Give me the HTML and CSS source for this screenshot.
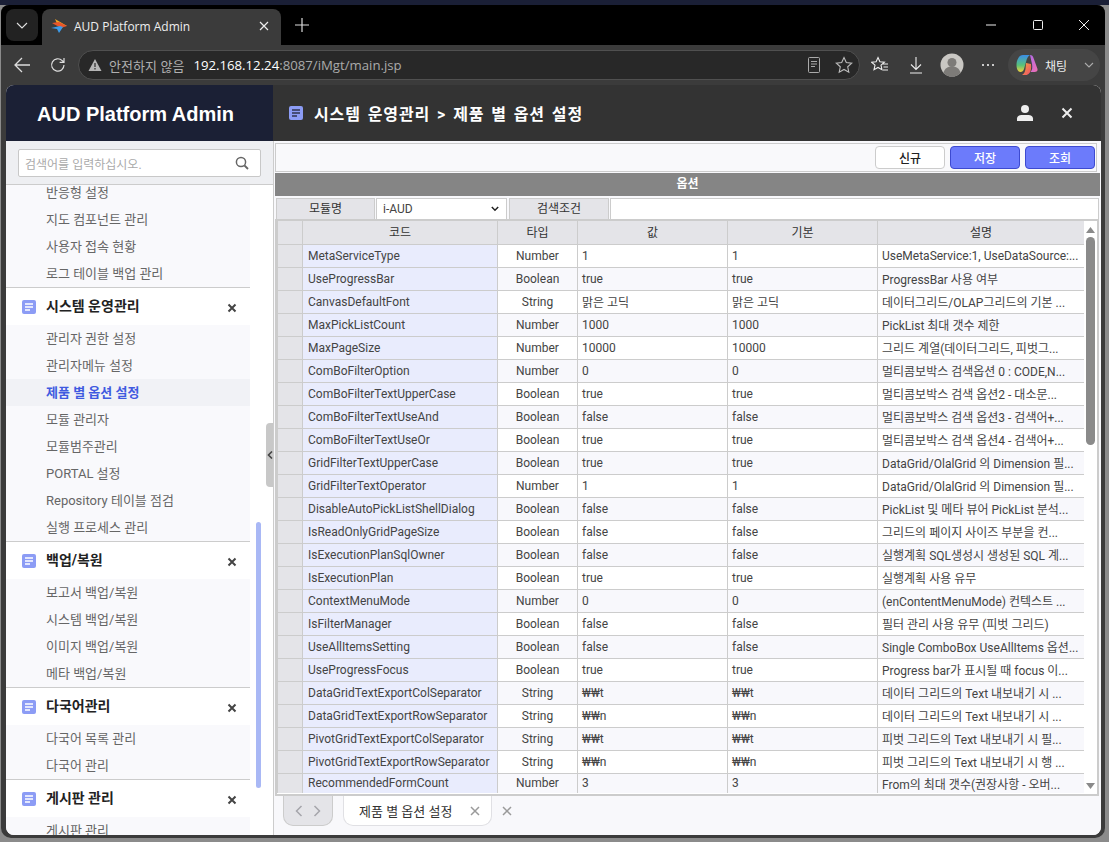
FILE: index.html
```html
<!DOCTYPE html>
<html lang="ko">
<head>
    <meta charset="UTF-8">
    <title>AUD Platform Admin</title>
    <link rel="stylesheet" href="styles.css">
</head>
<body>
    <div class="window">
        <div class="tabstrip">
            <div class="tab-menu">
                <svg width="12" height="12" viewBox="0 0 12 12"><path d="M1 4l5 5 5-5" fill="none" stroke="#ddd" stroke-width="1.1"/></svg>
            </div>
            <div class="tab">
                <svg class="favicon" width="16" height="16" viewBox="0 0 16 16">
                    <path d="M4 1l12 7-9 0z" fill="#f5a623"/>
                    <path d="M1 5l7-1 8 4-6 2z" fill="#e8562a"/>
                    <path d="M0 10l9-2 3 1-4 6-2-4z" fill="#3d9be9"/>
                </svg>
                <span class="tab-title">AUD Platform Admin</span>
                <svg width="12" height="12" viewBox="0 0 12 12"><path d="M2 2l8 8M10 2l-8 8" stroke="#eee" stroke-width="1.2"/></svg>
            </div>
            <div class="tab-new">
                <svg width="16" height="16" viewBox="0 0 16 16"><path d="M8 1v14M1 8h14" stroke="#ddd" stroke-width="1.2"/></svg>
            </div>
            <div class="win-controls">
                <svg width="12" height="12" viewBox="0 0 12 12"><path d="M1 6h10" stroke="#eee" stroke-width="1"/></svg>
                <svg width="12" height="12" viewBox="0 0 12 12"><rect x="1.5" y="1.5" width="9" height="9" rx="1" fill="none" stroke="#eee" stroke-width="1"/></svg>
                <svg width="12" height="12" viewBox="0 0 12 12"><path d="M1 1l10 10M11 1L1 11" stroke="#eee" stroke-width="1"/></svg>
            </div>
        </div>

        <div class="toolbar">
            <svg class="nav-icon" width="18" height="18" viewBox="0 0 18 18"><path d="M17 9H2M9 2L2 9l7 7" fill="none" stroke="#ddd" stroke-width="1.3"/></svg>
            <svg class="nav-icon" width="18" height="18" viewBox="0 0 18 18"><path d="M15 9a6.2 6.2 0 1 1-1.8-4.4L15 6.4M15 2v4.4h-4.4" fill="none" stroke="#ddd" stroke-width="1.2"/></svg>
            <div class="address">
                <svg width="14" height="14" viewBox="0 0 14 14"><path d="M7 1l6.5 12H.5z" fill="#b5b5b5"/><path d="M7 5v4M7 10v1.5" stroke="#333" stroke-width="1.3"/></svg>
                <span class="insecure">안전하지 않음</span>
                <span class="url"><b>192.168.12.24</b>:8087/iMgt/main.jsp</span>
                <span class="address-end">
                    <svg width="14" height="18" viewBox="0 0 14 18"><rect x="1.5" y="1.5" width="11" height="15" rx="1" fill="none" stroke="#aaa"/><path d="M4 5.5h6M4 8h6M4 10.5h4" stroke="#aaa"/></svg>
                    <svg width="18" height="18" viewBox="0 0 18 18"><path d="M9 1.5l2.3 5 5.4.6-4 3.7 1.1 5.4L9 13.5l-4.8 2.7 1.1-5.4-4-3.7 5.4-.6z" fill="none" stroke="#bbb" stroke-width="1.1"/></svg>
                </span>
            </div>
            <div class="tool-icons">
                <svg width="18" height="18" viewBox="0 0 18 18"><path d="M7 1.5l1.9 4.2 4.5.5-3.4 3 1 4.5L7 11.500l-4 2.200 1-4.500-3.400-3 4.500-.5zM12 8h5M12.500 11h4.500M12 14h5" fill="none" stroke="#eee" stroke-width="1.1"/></svg>
                <svg width="18" height="18" viewBox="0 0 18 18"><path d="M9 1v12M4 8.500l5 5 5-5M3 17h12" fill="none" stroke="#eee" stroke-width="1.1"/></svg>
                <svg width="24" height="24" viewBox="0 0 24 24"><circle cx="12" cy="12" r="11.500" fill="#c9c7c3"/><circle cx="12" cy="9.500" r="4.500" fill="#7d7b78"/><path d="M3.500 20c1-5 4.500-6.500 8.500-6.500s7.500 1.500 8.500 6.500a11.500 11.500 0 0 1-17 0z" fill="#7d7b78"/></svg>
                <svg width="16" height="16" viewBox="0 0 16 16"><circle cx="3" cy="8" r="1.100" fill="#eee"/><circle cx="8" cy="8" r="1.100" fill="#eee"/><circle cx="13" cy="8" r="1.100" fill="#eee"/></svg>
            </div>
            <div class="copilot">
                <svg width="22" height="22" viewBox="0 0 22 22">
                    <defs>
                        <linearGradient id="cop-a" x1="0" y1="0" x2="0" y2="1"><stop offset="0" stop-color="#3b8ee8"/><stop offset=".6" stop-color="#58c27a"/><stop offset="1" stop-color="#f3d13b"/></linearGradient>
                        <linearGradient id="cop-b" x1="0" y1="0" x2="1" y2="1"><stop offset="0" stop-color="#b06be8"/><stop offset="1" stop-color="#f36fb0"/></linearGradient>
                        <linearGradient id="cop-c" x1="0" y1="0" x2="1" y2="1"><stop offset="0" stop-color="#f2a23b"/><stop offset="1" stop-color="#ef4f6a"/></linearGradient>
                    </defs>
                    <path d="M7 1h7c-2 1-3 3-4 7l-2 7c-.5 2-2 3-3.500 3C2 18 .5 15 .5 11 .5 6 3 1 7 1z" fill="url(#cop-a)"/>
                    <path d="M14 1c2 0 3 1 3.500 3L21.500 15c.5 2-1 3-3 3h-4c2-2 2-5 1.500-8z" fill="url(#cop-b)"/>
                    <path d="M10 9l5 1c.5 4 0 8-2.500 10-1 1-2.500 1-4.500 1H6c2-1 3-3 3.500-6z" fill="url(#cop-c)"/>
                </svg>
                <span>채팅</span>
                <svg class="copilot-caret" width="10" height="10" viewBox="0 0 10 10"><path d="M1 3l4 4 4-4" fill="none" stroke="#aaa" stroke-width="1.100"/></svg>
            </div>
        </div>

        <div class="page">
            <aside class="sidebar">
                <div class="brand">AUD Platform Admin</div>
                <div class="search-wrap">
                    <div class="search">
                        <span>검색어를 입력하십시오.</span>
                        <svg width="14" height="14" viewBox="0 0 14 14"><circle cx="6" cy="6" r="4.600" fill="none" stroke="#666" stroke-width="1.500"/><path d="M9.500 9.500L13 13" stroke="#666" stroke-width="1.800"/></svg>
                    </div>
                </div>
                <div class="menu">
                    <ul class="menu-items menu-first">
                        <li>반응형 설정</li>
                        <li>지도 컴포넌트 관리</li>
                        <li>사용자 접속 현황</li>
                        <li>로그 테이블 백업 관리</li>
                    </ul>
                    <div class="menu-head">
                        <svg class="doc-icon" width="14" height="14" viewBox="0 0 14 14"><rect width="14" height="14" rx="2" fill="#8c9cf5"/><path d="M3 4h8M3 7h8M3 10h5" stroke="#fff" stroke-width="1.500"/></svg>
                        <span>시스템 운영관리</span>
                        <svg class="menu-close" width="10" height="10" viewBox="0 0 10 10"><path d="M1.500 1.500l7 7M8.500 1.500l-7 7" stroke="#444" stroke-width="2"/></svg>
                    </div>
                    <ul class="menu-items">
                        <li>관리자 권한 설정</li>
                        <li>관리자메뉴 설정</li>
                        <li class="active">제품 별 옵션 설정</li>
                        <li>모듈 관리자</li>
                        <li>모듈범주관리</li>
                        <li>PORTAL 설정</li>
                        <li>Repository 테이블 점검</li>
                        <li>실행 프로세스 관리</li>
                    </ul>
                    <div class="menu-head">
                        <svg class="doc-icon" width="14" height="14" viewBox="0 0 14 14"><rect width="14" height="14" rx="2" fill="#8c9cf5"/><path d="M3 4h8M3 7h8M3 10h5" stroke="#fff" stroke-width="1.500"/></svg>
                        <span>백업/복원</span>
                        <svg class="menu-close" width="10" height="10" viewBox="0 0 10 10"><path d="M1.500 1.500l7 7M8.500 1.500l-7 7" stroke="#444" stroke-width="2"/></svg>
                    </div>
                    <ul class="menu-items">
                        <li>보고서 백업/복원</li>
                        <li>시스템 백업/복원</li>
                        <li>이미지 백업/복원</li>
                        <li>메타 백업/복원</li>
                    </ul>
                    <div class="menu-head">
                        <svg class="doc-icon" width="14" height="14" viewBox="0 0 14 14"><rect width="14" height="14" rx="2" fill="#8c9cf5"/><path d="M3 4h8M3 7h8M3 10h5" stroke="#fff" stroke-width="1.500"/></svg>
                        <span>다국어관리</span>
                        <svg class="menu-close" width="10" height="10" viewBox="0 0 10 10"><path d="M1.500 1.500l7 7M8.500 1.500l-7 7" stroke="#444" stroke-width="2"/></svg>
                    </div>
                    <ul class="menu-items">
                        <li>다국어 목록 관리</li>
                        <li>다국어 관리</li>
                    </ul>
                    <div class="menu-head">
                        <svg class="doc-icon" width="14" height="14" viewBox="0 0 14 14"><rect width="14" height="14" rx="2" fill="#8c9cf5"/><path d="M3 4h8M3 7h8M3 10h5" stroke="#fff" stroke-width="1.500"/></svg>
                        <span>게시판 관리</span>
                        <svg class="menu-close" width="10" height="10" viewBox="0 0 10 10"><path d="M1.500 1.500l7 7M8.500 1.500l-7 7" stroke="#444" stroke-width="2"/></svg>
                    </div>
                    <ul class="menu-items">
                        <li>게시판 관리</li>
                    </ul>
                    <div class="menu-thumb"></div>
                </div>
            </aside>

            <main class="main">
                <div class="topbar">
                    <svg width="14" height="14" viewBox="0 0 14 14"><rect width="14" height="14" rx="2" fill="#8c9cf5"/><path d="M3 4h8M3 7h8M3 10h5" stroke="#2f3350" stroke-width="1.500"/></svg>
                    <h1>시스템 운영관리 &gt; 제품 별 옵션 설정</h1>
                    <svg class="top-user" width="18" height="18" viewBox="0 0 18 18"><circle cx="9" cy="5" r="4" fill="#eee"/><path d="M1 17v-2.500c0-2 2-3.500 4.500-3.500h7c2.500 0 4.500 1.500 4.500 3.500V17z" fill="#eee"/></svg>
                    <svg class="top-close" width="12" height="12" viewBox="0 0 12 12"><path d="M1.500 1.500l9 9M10.500 1.500l-9 9" stroke="#eee" stroke-width="2"/></svg>
                </div>
                <div class="content">
                    <button class="collapse" type="button">
                        <svg width="6" height="8" viewBox="0 0 6 8"><path d="M5 .5L1.500 4 5 7.500" fill="none" stroke="#444" stroke-width="1.600"/></svg>
                    </button>
                    <div class="actions">
                        <button class="btn" type="button">신규</button>
                        <button class="btn btn-primary" type="button">저장</button>
                        <button class="btn btn-primary" type="button">조회</button>
                    </div>
                    <div class="panel-title">옵션</div>
                    <div class="filters">
                        <div class="filter-label label-module">모듈명</div>
                        <div class="filter-select">
                            <span>i-AUD</span>
                            <svg width="8" height="6" viewBox="0 0 8 6"><path d="M.8 1L4 4.200 7.200 1" fill="none" stroke="#222" stroke-width="1.500"/></svg>
                        </div>
                        <div class="filter-label label-search">검색조건</div>
                        <div class="filter-input"></div>
                    </div>
                    <div class="grid-wrap">
                        <div class="grid-scroll">
                            <table class="grid">
                                <colgroup>
                                    <col class="col-head"><col class="col-code"><col class="col-type"><col class="col-value"><col class="col-default"><col class="col-desc">
                                </colgroup>
                                <thead>
                                    <tr><th></th><th>코드</th><th>타입</th><th>값</th><th>기본</th><th>설명</th></tr>
                                </thead>
                                <tbody>
                                    <tr><th></th><td class="code">MetaServiceType</td><td class="type">Number</td><td>1</td><td>1</td><td>UseMetaService:1, UseDataSource:...</td></tr>
                                    <tr><th></th><td class="code">UseProgressBar</td><td class="type">Boolean</td><td>true</td><td>true</td><td>ProgressBar 사용 여부</td></tr>
                                    <tr><th></th><td class="code">CanvasDefaultFont</td><td class="type">String</td><td>맑은 고딕</td><td>맑은 고딕</td><td>데이터그리드/OLAP그리드의 기본 ...</td></tr>
                                    <tr><th></th><td class="code">MaxPickListCount</td><td class="type">Number</td><td>1000</td><td>1000</td><td>PickList 최대 갯수 제한</td></tr>
                                    <tr><th></th><td class="code">MaxPageSize</td><td class="type">Number</td><td>10000</td><td>10000</td><td>그리드 계열(데이터그리드, 피벗그...</td></tr>
                                    <tr><th></th><td class="code">ComBoFilterOption</td><td class="type">Number</td><td>0</td><td>0</td><td>멀티콤보박스 검색옵션 0 : CODE,N...</td></tr>
                                    <tr><th></th><td class="code">ComBoFilterTextUpperCase</td><td class="type">Boolean</td><td>true</td><td>true</td><td>멀티콤보박스 검색 옵션2 - 대소문...</td></tr>
                                    <tr><th></th><td class="code">ComBoFilterTextUseAnd</td><td class="type">Boolean</td><td>false</td><td>false</td><td>멀티콤보박스 검색 옵션3 - 검색어+...</td></tr>
                                    <tr><th></th><td class="code">ComBoFilterTextUseOr</td><td class="type">Boolean</td><td>true</td><td>true</td><td>멀티콤보박스 검색 옵션4 - 검색어+...</td></tr>
                                    <tr><th></th><td class="code">GridFilterTextUpperCase</td><td class="type">Boolean</td><td>true</td><td>true</td><td>DataGrid/OlalGrid 의 Dimension 필...</td></tr>
                                    <tr><th></th><td class="code">GridFilterTextOperator</td><td class="type">Number</td><td>1</td><td>1</td><td>DataGrid/OlalGrid 의 Dimension 필...</td></tr>
                                    <tr><th></th><td class="code">DisableAutoPickListShellDialog</td><td class="type">Boolean</td><td>false</td><td>false</td><td>PickList 및 메타 뷰어 PickList 분석...</td></tr>
                                    <tr><th></th><td class="code">IsReadOnlyGridPageSize</td><td class="type">Boolean</td><td>false</td><td>false</td><td>그리드의 페이지 사이즈 부분을 컨...</td></tr>
                                    <tr><th></th><td class="code">IsExecutionPlanSqlOwner</td><td class="type">Boolean</td><td>false</td><td>false</td><td>실행계획 SQL생성시 생성된 SQL 계...</td></tr>
                                    <tr><th></th><td class="code">IsExecutionPlan</td><td class="type">Boolean</td><td>true</td><td>true</td><td>실행계획 사용 유무</td></tr>
                                    <tr><th></th><td class="code">ContextMenuMode</td><td class="type">Number</td><td>0</td><td>0</td><td>(enContentMenuMode) 컨텍스트 ...</td></tr>
                                    <tr><th></th><td class="code">IsFilterManager</td><td class="type">Boolean</td><td>false</td><td>false</td><td>필터 관리 사용 유무 (피벗 그리드)</td></tr>
                                    <tr><th></th><td class="code">UseAllItemsSetting</td><td class="type">Boolean</td><td>false</td><td>false</td><td>Single ComboBox UseAllItems 옵션...</td></tr>
                                    <tr><th></th><td class="code">UseProgressFocus</td><td class="type">Boolean</td><td>true</td><td>true</td><td>Progress bar가 표시될 때 focus 이...</td></tr>
                                    <tr><th></th><td class="code">DataGridTextExportColSeparator</td><td class="type">String</td><td>₩₩t</td><td>₩₩t</td><td>데이터 그리드의 Text 내보내기 시 ...</td></tr>
                                    <tr><th></th><td class="code">DataGridTextExportRowSeparator</td><td class="type">String</td><td>₩₩n</td><td>₩₩n</td><td>데이터 그리드의 Text 내보내기 시 ...</td></tr>
                                    <tr><th></th><td class="code">PivotGridTextExportColSeparator</td><td class="type">String</td><td>₩₩t</td><td>₩₩t</td><td>피벗 그리드의 Text 내보내기 시 필...</td></tr>
                                    <tr><th></th><td class="code">PivotGridTextExportRowSeparator</td><td class="type">String</td><td>₩₩n</td><td>₩₩n</td><td>피벗 그리드의 Text 내보내기 시 행 ...</td></tr>
                                    <tr class="row-last"><th></th><td class="code">RecommendedFormCount</td><td class="type">Number</td><td>3</td><td>3</td><td>From의 최대 갯수(권장사항 - 오버...</td></tr>
                                </tbody>
                            </table>
                        </div>
                        <div class="scrollbar">
                            <svg width="9" height="6" viewBox="0 0 9 6"><path d="M4.500 0L9 6H0z" fill="#8a8a8a"/></svg>
                            <div class="scroll-thumb"></div>
                            <svg class="scroll-down" width="9" height="6" viewBox="0 0 9 6"><path d="M0 0h9L4.500 6z" fill="#8a8a8a"/></svg>
                        </div>
                    </div>
                    <div class="tabbar">
                        <div class="tab-nav">
                            <svg width="8" height="12" viewBox="0 0 8 12"><path d="M6.500 1L1.500 6l5 5" fill="none" stroke="#a5a5ab" stroke-width="1.500"/></svg>
                            <svg width="8" height="12" viewBox="0 0 8 12"><path d="M1.500 1l5 5-5 5" fill="none" stroke="#a5a5ab" stroke-width="1.500"/></svg>
                        </div>
                        <div class="page-tab">
                            <span>제품 별 옵션 설정</span>
                            <svg width="10" height="10" viewBox="0 0 10 10"><path d="M1 1l8 8M9 1L1 9" stroke="#9a9a9a" stroke-width="1.500"/></svg>
                        </div>
                        <svg class="close-all" width="10" height="10" viewBox="0 0 10 10"><path d="M1 1l8 8M9 1L1 9" stroke="#9a9a9a" stroke-width="1.500"/></svg>
                    </div>
                </div>
            </main>
        </div>
    </div>
</body>
</html>
```

FILE: styles.css
```css
* {
    margin: 0;
    padding: 0;
    box-sizing: border-box;
}

html, body {
    width: 1109px;
    height: 842px;
    overflow: hidden;
}

body {
    background: linear-gradient(#1a1f36 0, #1a1f36 5px, #8b8b8b 5px);
    padding: 5px 4px 4px 1px;
    font-family: Roboto, "Noto Sans CJK KR", sans-serif;
    font-size: 12px;
    color: #444;
}

svg {
    display: block;
    flex: none;
}

/* browser frame */
.window {
    height: 833px;
    background: #3b3b3b;
    border-radius: 8px 8px 10px 10px;
    display: flex;
    flex-direction: column;
    overflow: hidden;
}

.tabstrip {
    height: 40px;
    background: #000;
    padding: 4px 0 0 5px;
    display: flex;
    align-items: flex-start;
    flex: none;
}

.tab-menu {
    width: 32px;
    height: 32px;
    background: #222;
    border-radius: 8px;
    display: flex;
    align-items: center;
    justify-content: center;
    margin-right: 4px;
}

.tab {
    width: 239px;
    height: 36px;
    background: #3b3b3b;
    border-radius: 8px 8px 0 0;
    display: flex;
    align-items: center;
    padding: 0 11px 2px 9px;
    color: #eee;
    font-size: 12px;
    font-family: "Open Sans", sans-serif;
}

.tab-title {
    flex: 1;
    margin-left: 7px;
}

.tab-new {
    margin: 8px 0 0 13px;
}

.win-controls {
    margin-left: auto;
    width: 105px;
    margin-right: 15px;
    margin-top: 10px;
    display: flex;
    justify-content: space-between;
}

.toolbar {
    height: 40px;
    flex: none;
    display: flex;
    align-items: center;
    padding-left: 12px;
}

.nav-icon + .nav-icon {
    margin-left: 18px;
}

.address {
    width: 782px;
    height: 30px;
    margin-left: 11px;
    background: #282828;
    border: 1px solid #505050;
    border-radius: 15px;
    display: flex;
    align-items: center;
    padding: 0 6px 0 9px;
    font-family: "Open Sans", sans-serif;
    font-size: 13.2px;
    color: #aaa;
}

.insecure {
    margin-left: 7px;
    font-size: 13px;
    color: #b0b0b0;
    font-family: "Noto Sans CJK KR", sans-serif;
}

.url {
    margin-left: 9px;
}

.url b {
    font-weight: 400;
    color: #fff;
}

.address-end {
    margin-left: auto;
    display: flex;
    align-items: center;
    gap: 14px;
}

.tool-icons {
    width: 148px;
    padding-left: 2px;
    display: grid;
    grid-template-columns: repeat(4, 36px);
    justify-items: center;
    align-items: center;
}

.copilot {
    width: 92px;
    height: 32px;
    background: #454545;
    border-radius: 16px;
    display: flex;
    align-items: center;
    padding-left: 8px;
    color: #eee;
    font-size: 12px;
    font-family: "Noto Sans CJK KR", sans-serif;
}

.copilot span {
    margin-left: 7px;
}

.copilot-caret {
    margin-left: auto;
    margin-right: 6px;
}

/* page */
.page {
    flex: 1;
    margin: 0 4px 3px 5px;
    border-radius: 8px;
    overflow: hidden;
    background: #fff;
    display: flex;
    min-height: 0;
    font-family: Roboto, "Noto Sans CJK KR", sans-serif;
}

.sidebar {
    width: 267px;
    flex: none;
    display: flex;
    flex-direction: column;
    min-height: 0;
}

.brand {
    height: 56px;
    flex: none;
    background: #1b2035;
    color: #fff;
    font-family: "Liberation Sans", sans-serif;
    font-size: 20px;
    font-weight: 700;
    line-height: 58px;
    padding-left: 31px;
}

.search-wrap {
    height: 44px;
    flex: none;
    background: #eeeff2;
    border-bottom: 1px solid #ccc;
    padding: 8px 12px;
}

.search {
    height: 28px;
    background: #fff;
    border: 1px solid #c8c8c8;
    border-radius: 2px;
    display: flex;
    align-items: center;
    justify-content: space-between;
    padding: 0 11px 0 6px;
    color: #aaa;
    font-size: 12px;
}

.menu {
    flex: 1;
    position: relative;
    overflow: hidden;
    min-height: 0;
    width: 267px;
    padding-right: 23px;
}

.menu-items {
    list-style: none;
    background: #f9f9fc;
}

.menu-first {
    margin-top: -6px;
}

.menu-items li {
    height: 27px;
    line-height: 28px;
    padding-left: 40px;
    font-size: 13px;
    color: #666;
}

.menu-items li.active {
    background: #f1f2f6;
    color: #3f5ae0;
    font-weight: 700;
}

.menu-head {
    height: 38px;
    border-top: 1px solid #ccc;
    background: #fff;
    display: flex;
    align-items: center;
    padding: 0 13px 0 16px;
    font-size: 14px;
    font-weight: 700;
    color: #222;
}

.menu-head span {
    margin-top: -3px;
}

.doc-icon {
    margin-right: 10px;
    margin-top: 1px;
}

.menu-close {
    margin-left: auto;
    margin-top: 3px;
}

.menu-thumb {
    position: absolute;
    left: 250px;
    top: 337px;
    width: 5px;
    height: 266px;
    background: #a9b8f5;
    border-radius: 3px;
}

.main {
    flex: 1;
    min-width: 0;
    display: flex;
    flex-direction: column;
}

.topbar {
    height: 56px;
    flex: none;
    background: #333;
    color: #fff;
    display: flex;
    align-items: center;
    padding: 0 28px 0 16px;
}

.topbar h1 {
    font-size: 16px;
    font-weight: 700;
    letter-spacing: .9px;
    word-spacing: 2px;
    margin-left: 11px;
}

.top-user {
    margin-left: auto;
    margin-right: 27px;
}

.content {
    flex: 1;
    min-height: 0;
    position: relative;
    background: #f8f8fb;
    border-left: 1px solid #ccc;
    padding: 2px 1px 0 1px;
    display: flex;
    flex-direction: column;
}

.collapse {
    position: absolute;
    left: -8px;
    top: 282px;
    width: 7px;
    height: 64px;
    border: none;
    background: #c8c8c8;
    border-radius: 4px 0 0 4px;
    display: flex;
    align-items: center;
    justify-content: center;
}

.actions {
    height: 29px;
    flex: none;
    margin-right: 3px;
    background: #f9f9fb;
    border: 1px solid #ccc;
    display: flex;
    align-items: center;
    justify-content: flex-end;
    gap: 5px;
    padding: 0 1px 0 0;
}

.btn {
    width: 70px;
    height: 23px;
    border: 1px solid #ccc;
    border-radius: 4px;
    background: #fff;
    font-family: inherit;
    font-size: 12px;
    font-weight: 500;
    color: #222;
}

.btn-primary {
    background: #6c7bfb;
    border-color: #3d4ad0;
    color: #fff;
}

.panel-title {
    height: 23px;
    flex: none;
    background: #858585;
    color: #fff;
    font-weight: 700;
    text-align: center;
    line-height: 23px;
    margin-top: 1px;
}

.filters {
    height: 23px;
    flex: none;
    display: flex;
    gap: 1px;
    padding: 1px 1px 0 1px;
    margin-top: 1px;
}

.filter-label {
    background: #e4e4e8;
    border: 1px solid #ccc;
    color: #333;
    text-align: center;
    line-height: 20px;
}

.label-module {
    width: 99px;
}

.label-search {
    width: 100px;
    margin-left: 1px;
}

.filter-select {
    width: 131px;
    background: #fff;
    border: 1px solid #ccc;
    display: flex;
    align-items: center;
    justify-content: space-between;
    padding: 0 7px 0 6px;
    color: #444;
}

.filter-input {
    flex: 1;
    background: #fff;
    border: 1px solid #ccc;
}

.grid-wrap {
    height: 577px;
    flex: none;
    display: flex;
    margin: -1px 1px 0 0;
    border: 2px solid #ccc;
    background: #fff;
}

.grid-scroll {
    width: 807px;
    overflow: hidden;
    flex: none;
}

.grid {
    width: 807px;
    table-layout: fixed;
    border-collapse: collapse;
}

.col-head { width: 25px; }
.col-code { width: 195px; }
.col-type { width: 80px; }
.col-value { width: 150px; }
.col-default { width: 150px; }
.col-desc { width: 207px; }

.grid th,
.grid td {
    height: 23px;
    border: 1px solid #ccc;
    border-top: none;
    white-space: nowrap;
    overflow: hidden;
    padding: 0 4px;
    color: #444;
    font-weight: 400;
}

.grid th {
    background: #e4e4e8;
    text-align: center;
    color: #333;
}

.grid thead th {
    height: 23px;
    padding-bottom: 1px;
}

.grid tbody tr:nth-child(even) td {
    background: #f8f8fc;
}

.grid td.code,
.grid tbody tr:nth-child(even) td.code {
    background: #e9ecfd;
    padding-left: 5px;
}

.grid td.type {
    text-align: center;
}

.grid .row-last th,
.grid .row-last td {
    height: 20px;
    border-bottom: none;
}

.scrollbar {
    flex: 1;
    position: relative;
    display: flex;
    flex-direction: column;
    align-items: center;
    padding-top: 6px;
}

.scroll-thumb {
    width: 9px;
    height: 208px;
    margin-top: 4px;
    background: #8a8a8a;
    border-radius: 5px;
}

.scroll-down {
    position: absolute;
    bottom: 5px;
}

.tabbar {
    flex: 1;
    min-height: 0;
    display: flex;
    align-items: flex-start;
    padding-left: 8px;
}

.tab-nav {
    width: 50px;
    height: 30px;
    background: #e4e4e8;
    border: 1px solid #ccc;
    border-top: none;
    border-radius: 0 0 10px 10px;
    display: flex;
    align-items: center;
    justify-content: center;
    gap: 10px;
}

.page-tab {
    width: 149px;
    height: 30px;
    margin-left: 10px;
    background: #fff;
    border: 1px solid #e0e0e4;
    border-top: none;
    border-radius: 0 0 10px 10px;
    display: flex;
    align-items: center;
    justify-content: space-between;
    padding: 0 11px 0 15px;
    font-size: 13px;
    color: #333;
}

.close-all {
    margin: 10px 0 0 10px;
}
```
